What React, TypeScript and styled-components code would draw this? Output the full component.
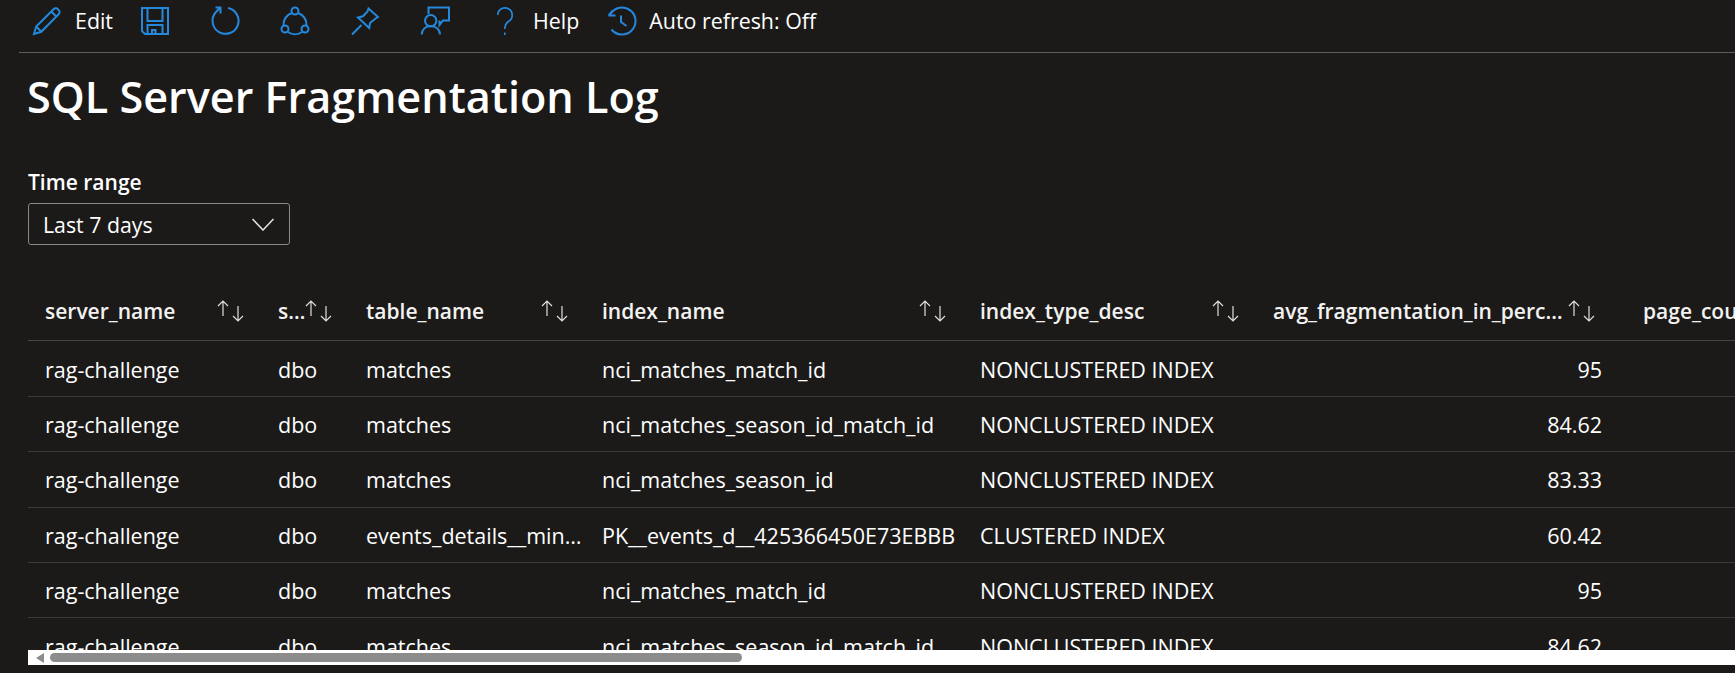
import React from "react";
import styled, { createGlobalStyle } from "styled-components";

const Global = createGlobalStyle`
  html, body { margin: 0; padding: 0; background: #1b1a19; }
  body { font-family: "Open Sans", "Noto Sans", "Liberation Sans", sans-serif; color: #fff; overflow: hidden; }
`;

const Page = styled.div`
  width: 1735px; height: 673px; display: flex; flex-direction: column; overflow: hidden; background: #1b1a19;
`;
const Toolbar = styled.div`
  display: flex; align-items: center; height: 53px; box-sizing: border-box; padding-bottom: 11px; margin-left: 19px; border-bottom: 1px solid #605e5c; flex: none;
`;
const ToolItem = styled.div<{ $iconOnly?: boolean }>`
  display: flex; align-items: center; gap: 14px; padding: ${(p) => (p.$iconOnly ? "0 28px 0 14px" : "0 14px")}; height: 100%;
  font-size: 21.4px; color: #fff; white-space: nowrap;
`;
const ToolIcon = styled.svg`
  width: 28px; height: 28px; flex: none; fill: none; stroke: #2488dc; stroke-width: 2; overflow: visible;
`;
const ThinIcon = styled(ToolIcon)`
  stroke-width: 1.7;
`;
const Title = styled.h1`
  margin: 19px 0 0 27px; font-size: 43.2px; line-height: 50px; font-weight: 600; flex: none;
`;
const Filter = styled.div`
  margin: 46px 0 0 28px; flex: none;
`;
const FilterLabel = styled.div`
  font-size: 21px; line-height: 28px; font-weight: 600;
`;
const Select = styled.div`
  margin-top: 7px; width: 262px; height: 42px; box-sizing: border-box; border: 1px solid #8a8886; border-radius: 3px;
  display: flex; align-items: center; justify-content: space-between; padding: 0 15px 0 14px; font-size: 21.3px;
`;
const Chevron = styled.svg`
  width: 22px; height: 13px; fill: none; stroke: #e8e6e4; stroke-width: 1.5;
`;
const TableWrap = styled.div`
  margin: 37px 0 0 28px; flex: 1; min-height: 0; overflow: hidden;
`;
const Row = styled.div<{ $head?: boolean }>`
  display: grid; grid-template-columns: 233px 88px 236px 378px 293px 362px 300px; align-items: center; box-sizing: border-box;
  height: ${(p) => (p.$head ? "59.4px" : "55.4px")}; border-bottom: 1px solid ${(p) => (p.$head ? "#484644" : "#3b3a39")};
`;
const HeadCell = styled.div<{ $num?: boolean; $last?: boolean }>`
  display: flex; align-items: center; min-width: 0; gap: 0;
  padding: 0 ${(p) => (p.$num ? 22 : 16)}px 0 ${(p) => (p.$last ? 25 : 17)}px;
  font-size: 21px; font-weight: 600; color: #f3f2f1;
`;
const HeadName = styled.span`
  flex: 1; min-width: 0; overflow: hidden; text-overflow: ellipsis; white-space: nowrap;
`;
const Sort = styled.svg`
  width: 28px; height: 22px; flex: none; fill: none; stroke: #e1dfdd; stroke-width: 1.2;
`;
const Cell = styled.div<{ $num?: boolean }>`
  padding: 1px ${(p) => (p.$num ? 16 : 0)}px 0 17px; min-width: 0; overflow: hidden; text-overflow: ellipsis; white-space: nowrap;
  font-size: 21.5px; text-align: ${(p) => (p.$num ? "right" : "left")}; color: #fff;
`;
const ScrollBar = styled.div`
  flex: none; height: 15px; margin: 0 0 8px 28px; background: #fff; display: flex; align-items: center;
`;
const ArrowLeft = styled.svg`
  width: 8px; height: 10px; margin-left: 8px; flex: none; fill: #8c8c8c;
`;
const Thumb = styled.div`
  width: 692px; height: 9px; margin-left: 6px; flex: none; background: #8c8c8c; border-radius: 5px;
`;

const Pencil = () => (
  <ToolIcon viewBox="0 0 28 28"><path d="M1 27l2.2-7.5L20.5 2.2a3 3 0 0 1 4.4 0l.7.7a3 3 0 0 1 0 4.4L8.3 24.8zM3.2 19.5l5.1 5.3M18.3 4.5l5 5" /></ToolIcon>
);
const Save = () => (
  <ToolIcon viewBox="0 0 28 28"><path d="M1 1h26v26H4l-3-3zM6.500 1v13h15V1M6.500 27v-9h15v9M11 27v-4h3.500v4" /></ToolIcon>
);
const Refresh = () => (
  <ToolIcon viewBox="0 0 28 28"><path d="M17 1A13 13 0 1 1 4.500 5.500L9.500.5M4.500.5h5v6" /></ToolIcon>
);
const Share = () => (
  <ToolIcon viewBox="0 0 28 28"><circle cx="14" cy="4" r="3.500" /><circle cx="4" cy="22" r="3.500" /><circle cx="24" cy="22" r="3.500" /><path d="M11 6A12 12 0 0 0 2.500 18.700M17 6A12 12 0 0 1 25.500 18.700M7 25A12 12 0 0 0 21 25" /></ToolIcon>
);
const Pin = () => (
  <ToolIcon viewBox="0 0 28 28"><path d="M1 27.500 10.500 18M17.500 1.500 27 10l-2.500 1.500L19 16l-.8 5L7 10.500l5-1.200 4.500-4.800z" /></ToolIcon>
);
const Feedback = () => (
  <ToolIcon viewBox="0 0 28 28"><circle cx="9.700" cy="13.700" r="5.700" /><path d="M.7 27.500c0-5 4-8.500 9-8.500s9.300 3.500 9.300 8.500M7.500 7V.5H28v13h-6L18.500 18v-4.500" /></ToolIcon>
);
const Help = () => (
  <ThinIcon viewBox="0 0 28 28"><path d="M6.800 8a7.200 7.200 0 1 1 11 6.200C15 16 13.800 18 13.800 22M13.800 25.500v2.500" /></ThinIcon>
);
const History = () => (
  <ToolIcon viewBox="0 0 28 28"><path d="M3.500 7A13.500 13.500 0 1 1 4.500 22.500M1.500 8.500h7M1.500 8.500l4-5M14 8.500V15l5.500 4" /></ToolIcon>
);
const SortIcon = () => (
  <Sort viewBox="0 0 28 22"><path d="M6 1v15M1 6l5-5 5 5M21 6v15M16 16l5 5 5-5" /></Sort>
);

const cols = ["server_name", "schema_name", "table_name", "index_name", "index_type_desc", "avg_fragmentation_in_percent", "page_count"];
const rows = [
  ["matches", "nci_matches_match_id", "NONCLUSTERED INDEX", "95"],
  ["matches", "nci_matches_season_id_match_id", "NONCLUSTERED INDEX", "84.62"],
  ["matches", "nci_matches_season_id", "NONCLUSTERED INDEX", "83.33"],
  ["events_details__minutes", "PK__events_d__425366450E73EBBB", "CLUSTERED INDEX", "60.42"],
  ["matches", "nci_matches_match_id", "NONCLUSTERED INDEX", "95"],
  ["matches", "nci_matches_season_id_match_id", "NONCLUSTERED INDEX", "84.62"],
];

export default function App() {
  return (
    <Page>
      <Global />
      <Toolbar>
        <ToolItem><Pencil />Edit</ToolItem>
        <ToolItem $iconOnly><Save /></ToolItem>
        <ToolItem $iconOnly><Refresh /></ToolItem>
        <ToolItem $iconOnly><Share /></ToolItem>
        <ToolItem $iconOnly><Pin /></ToolItem>
        <ToolItem $iconOnly><Feedback /></ToolItem>
        <ToolItem><Help />Help</ToolItem>
        <ToolItem><History />Auto refresh: Off</ToolItem>
      </Toolbar>
      <Title>SQL Server Fragmentation Log</Title>
      <Filter>
        <FilterLabel>Time range</FilterLabel>
        <Select>
          Last 7 days
          <Chevron viewBox="0 0 22 13"><path d="M.5 1 11 12 21.500 1" /></Chevron>
        </Select>
      </Filter>
      <TableWrap>
        <Row $head>
          {cols.map((c, i) => (
            <HeadCell key={c} $num={i === 5} $last={i === 6}>
              <HeadName>{c}</HeadName>
              {i < 6 && <SortIcon />}
            </HeadCell>
          ))}
        </Row>
        {rows.map((r, i) => (
          <Row key={i}>
            <Cell>rag-challenge</Cell>
            <Cell>dbo</Cell>
            <Cell>{r[0]}</Cell>
            <Cell>{r[1]}</Cell>
            <Cell>{r[2]}</Cell>
            <Cell $num>{r[3]}</Cell>
          </Row>
        ))}
      </TableWrap>
      <ScrollBar>
        <ArrowLeft viewBox="0 0 8 10"><path d="M0 5 8 0v10z" /></ArrowLeft>
        <Thumb />
      </ScrollBar>
    </Page>
  );
}
